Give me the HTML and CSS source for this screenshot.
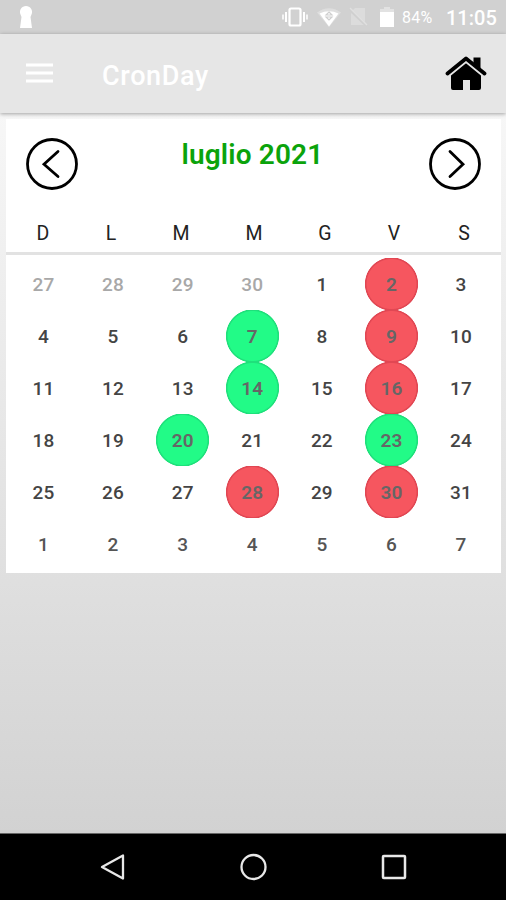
FILE: index.html
```html
<!DOCTYPE html>
<html lang="it">
<head>
    <meta charset="UTF-8">
    <meta name="viewport" content="width=device-width, initial-scale=1.0">
    <title>CronDay</title>
    <link rel="stylesheet" href="styles.css">
</head>
<body>
    <div class="status-bar">
        <svg class="keyhole" width="14" height="24" viewBox="0 0 14 24" fill="#fff">
            <path d="M7 1a6 6 0 0 1 5.500 8.500L11.500 12L13 23H1L2.500 12L1.500 9.500A6 6 0 0 1 7 1z"/>
        </svg>
        <div class="status-icons">
            <svg class="vibrate" width="26" height="20" viewBox="0 0 26 20" fill="none" stroke="#fff">
                <rect x="7.500" y="1.500" width="11" height="17" rx="1.500" stroke-width="2.200"/>
                <path d="M4 5v10M22 5v10" stroke-width="2"/>
                <path d="M1 7.500v5M25 7.500v5" stroke-width="1.500"/>
            </svg>
            <svg class="wifi" width="24" height="19" viewBox="0 0 24 19">
                <path d="M0 4.500Q12-4 24 4.500L12 19z" fill="#dedede"/>
                <path d="M2.500 5.500Q12 1 21.500 5.500L12 18.500z" fill="#fff"/>
                <path d="M12 4l3 3h-6zM9 9h6l-3 3z" fill="none" stroke="#cfcfcf" stroke-width="1.200"/>
            </svg>
            <svg class="no-sim" width="19" height="20" viewBox="0 0 19 20">
                <path d="M6 1h10v17H2V5z" fill="#dcdcdc"/>
                <path d="M0 2l18 17" stroke="#d0d0d0" stroke-width="3"/>
                <path d="M1 1l17 17" stroke="#e0e0e0" stroke-width="1.500"/>
            </svg>
            <svg class="battery" width="14" height="20" viewBox="0 0 14 20">
                <path d="M4 0h6v2h4v3H0V2h4z" fill="#e2e2e2"/>
                <path d="M0 5h14v15H0z" fill="#fff"/>
            </svg>
            <span class="percent">84%</span>
            <span class="clock">11:05</span>
        </div>
    </div>

    <header class="toolbar">
        <svg class="menu" width="27" height="20" viewBox="0 0 27 20" stroke="#fff" stroke-width="2.800">
            <path d="M0 2h27M0 10h27M0 18h27"/>
        </svg>
        <h1>CronDay</h1>
        <svg class="home" width="42" height="36" viewBox="0 0 42 36">
            <path d="M6 19L21 6l15 13v13q0 2-2 2h-9V24h-7v10H8q-2 0-2-2z" fill="#000"/>
            <path d="M2 19L21 3.500l19 15.500" fill="none" stroke="#e6e6e6" stroke-width="6"/>
            <path d="M28.500 1.500h7v12l-7-6z" fill="#000"/>
            <path d="M2.500 17.500L21 2.500l18.500 15" fill="none" stroke="#000" stroke-width="3.800" stroke-linecap="round" stroke-linejoin="round"/>
        </svg>
    </header>

    <main class="calendar">
        <div class="month">
            <svg class="arrow" width="54" height="54" viewBox="0 0 54 54" fill="none" stroke="#000" stroke-width="2.800">
                <circle cx="27" cy="27" r="24.500"/>
                <path d="M33 14.500L19 27.200l14 12.300" stroke-linecap="round"/>
            </svg>
            <h2>luglio 2021</h2>
            <svg class="arrow" width="54" height="54" viewBox="0 0 54 54" fill="none" stroke="#000" stroke-width="2.800">
                <circle cx="27" cy="27" r="24.500"/>
                <path d="M22 14.500L35 27.200l-13 12.300" stroke-linecap="round"/>
            </svg>
        </div>
        <div class="weekdays">
            <span>D</span><span>L</span><span>M</span><span>M</span><span>G</span><span>V</span><span>S</span>
        </div>
        <div class="days">
            <span class="prev">27</span><span class="prev">28</span><span class="prev">29</span><span class="prev">30</span><span>1</span><span class="red">2</span><span>3</span>
            <span>4</span><span>5</span><span>6</span><span class="green">7</span><span>8</span><span class="red">9</span><span>10</span>
            <span>11</span><span>12</span><span>13</span><span class="green">14</span><span>15</span><span class="red">16</span><span>17</span>
            <span>18</span><span>19</span><span class="green">20</span><span>21</span><span>22</span><span class="green">23</span><span>24</span>
            <span>25</span><span>26</span><span>27</span><span class="red">28</span><span>29</span><span class="red">30</span><span>31</span>
            <span class="next">1</span><span class="next">2</span><span class="next">3</span><span class="next">4</span><span class="next">5</span><span class="next">6</span><span class="next">7</span>
        </div>
    </main>

    <nav class="nav-bar">
        <svg width="28" height="28" viewBox="0 0 28 28" fill="none" stroke="#e8e8e8" stroke-width="2.300">
            <path d="M4 14L25 2.500v23z" stroke-linejoin="round"/>
        </svg>
        <svg width="28" height="28" viewBox="0 0 28 28" fill="none" stroke="#e8e8e8" stroke-width="2.300">
            <circle cx="14.500" cy="14" r="12"/>
        </svg>
        <svg width="28" height="28" viewBox="0 0 28 28" fill="none" stroke="#e8e8e8" stroke-width="2.500">
            <rect x="3" y="3" width="22" height="22" rx="0.800"/>
        </svg>
    </nav>
</body>
</html>
```
FILE: styles.css
```css
* {
    box-sizing: border-box;
}
body {
    margin: 0;
    height: 900px;
    display: flex;
    flex-direction: column;
    font-family: Roboto, sans-serif;
    background: linear-gradient(#f7f7f7 113px, #d2d2d2 834px);
    overflow: hidden;
}
svg {
    display: block;
    flex: none;
}
.status-bar {
    height: 34px;
    display: flex;
    justify-content: space-between;
    padding: 5px 10px 0 19px;
    background: #d1d1d1;
    color: #fff;
}
.status-icons {
    display: flex;
    align-items: flex-start;
    padding-top: 2px;
}
.wifi {
    margin: 1px 0 0 9px;
}
.no-sim {
    margin-left: 8px;
}
.battery {
    margin: 0 8px 0 12px;
}
.percent {
    width: 44px;
    font-size: 16px;
    line-height: 22px;
    letter-spacing: 0.3px;
}
.clock {
    width: 50px;
    font-size: 20px;
    font-weight: 500;
    line-height: 23px;
    white-space: nowrap;
}
.toolbar {
    height: 79px;
    display: flex;
    align-items: center;
    padding: 0 19px 0 26px;
    background: #e6e6e6;
    box-shadow: 0 1px 4px rgba(0, 0, 0, 0.35);
    color: #fff;
}
.menu {
    margin: -2px 49px 0 0;
}
h1 {
    margin: 4px auto 0 0;
    font-size: 27px;
    font-weight: 500;
    line-height: 32px;
    letter-spacing: 0.65px;
}
.calendar {
    width: 495px;
    height: 454px;
    margin: 6px 0 0 6px;
    background: #fff;
}
.month {
    height: 95px;
    display: flex;
    justify-content: space-between;
    padding: 18px 19px 0;
}
h2 {
    margin: 1px 2px 0 0;
    font-size: 28px;
    font-weight: 600;
    line-height: 34px;
    letter-spacing: 0.15px;
    color: #0ba30b;
}
.weekdays {
    height: 41px;
    display: grid;
    grid-template-columns: 70px 66px 74px 72px 70px 68px 72px;
    padding-left: 2px;
    border-bottom: 3px solid #e2e2e2;
    font-size: 19.500px;
    line-height: 39px;
    text-align: center;
    color: #222;
}
.days {
    display: grid;
    grid-template-columns: repeat(7, 53px);
    grid-auto-rows: 52px;
    column-gap: 16.600px;
    padding: 3px 0 0 11px;
    font-size: 19px;
    font-weight: 500;
    line-height: 54px;
    letter-spacing: 0.2px;
    text-align: center;
    color: #444;
}
.prev {
    color: #a8a8a8;
}
.next {
    color: #555;
}
.red, .green {
    font-weight: 600;
    color: #666;
}
.red {
    background: radial-gradient(circle, #f6565f 24.500px, #e14753 25.500px, #e14753 26.200px, transparent 26.900px);
}
.green {
    background: radial-gradient(circle, #22fb87 24.500px, #1fe07b 25.500px, #1fe07b 26.200px, transparent 26.900px);
}
.nav-bar {
    height: 67px;
    margin-top: auto;
    display: flex;
    justify-content: space-between;
    align-items: center;
    padding: 0 98px;
    background: #000;
    border-top: 1px solid #666;
}
```
